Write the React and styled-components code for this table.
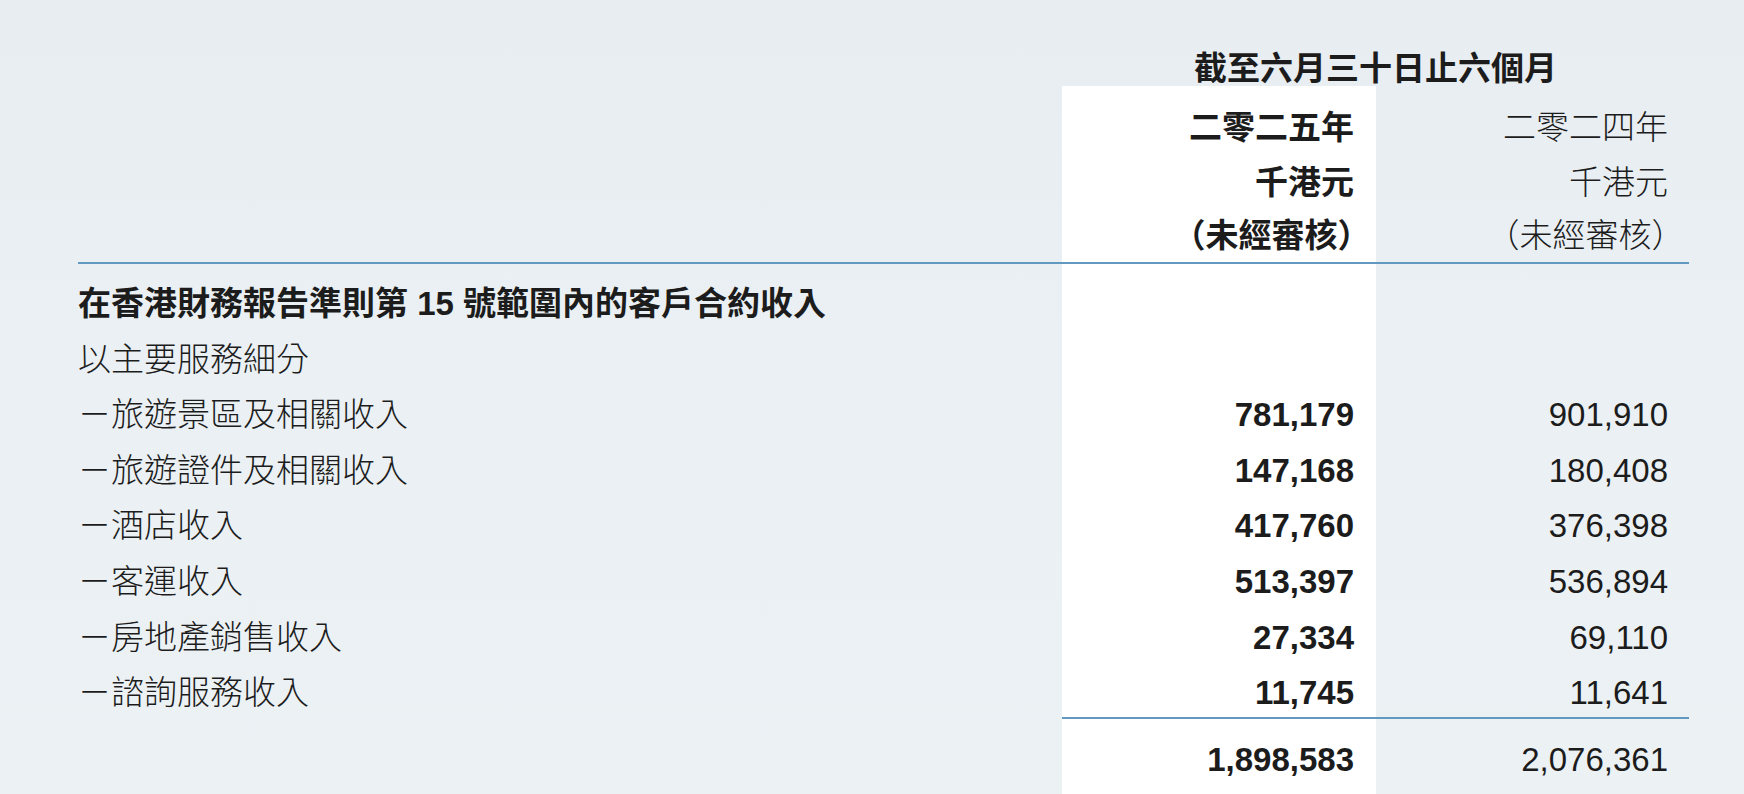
import React from "react";
import styled, { createGlobalStyle } from "styled-components";

const GlobalStyle = createGlobalStyle`
  html, body {
    margin: 0;
    padding: 0;
    height: 100%;
    overflow: hidden;
  }
  body {
    background: linear-gradient(180deg, #e7edf1 0%, #eaf0f3 45%, #ecf1f4 100%);
    font-family: "Liberation Sans", "Noto Sans CJK TC", sans-serif;
    font-feature-settings: "halt";
    color: #1c1c1c;
  }
`;

const Page = styled.div`
  height: 794px;
  box-sizing: border-box;
  padding: 52px 55px 0 78px;
  display: flex;
  flex-direction: column;
`;

const Row = styled.div`
  display: grid;
  grid-template-columns: 984px 314px 313px;
  flex: ${(p) => (p.$fill ? 1 : "none")};
  border-bottom: ${(p) => (p.$rule ? "2px solid #6199c0" : "none")};

  & > div {
    padding-top: ${(p) => p.$pt || 0}px;
    line-height: ${(p) => p.$lh || 55.6}px;
  }
`;

const Title = styled.div`
  grid-column: 2 / 4;
  text-align: center;
  font-size: 33px;
  font-weight: 700;
  && {
    line-height: 34px;
  }
`;

const Label = styled.div`
  font-size: 33px;
  white-space: nowrap;
  font-weight: ${(p) => (p.$bold ? 700 : 300)};
`;

const Amount = styled.div`
  font-size: 33px;
  white-space: nowrap;
  text-align: right;
  padding-right: ${(p) => (p.$current ? 22 : 21)}px;
  font-weight: ${(p) => (p.$current ? 700 : 300)};
  background: ${(p) => (p.$current ? "#ffffff" : "transparent")};
  border-bottom: ${(p) => (p.$rule ? "2px solid #6199c0" : "none")};
`;

const lines = [
  ["－旅遊景區及相關收入", "781,179", "901,910"],
  ["－旅遊證件及相關收入", "147,168", "180,408"],
  ["－酒店收入", "417,760", "376,398"],
  ["－客運收入", "513,397", "536,894"],
  ["－房地產銷售收入", "27,334", "69,110"],
  ["－諮詢服務收入", "11,745", "11,641"],
];

export default function App() {
  return (
    <>
      <GlobalStyle />
      <Page>
        <Row>
          <Label />
          <Title>截至六月三十日止六個月</Title>
        </Row>
        <Row $pt={14} $lh={55}>
          <Label />
          <Amount $current>二零二五年</Amount>
          <Amount>二零二四年</Amount>
        </Row>
        <Row $lh={55}>
          <Label />
          <Amount $current>千港元</Amount>
          <Amount>千港元</Amount>
        </Row>
        <Row $lh={52} $rule>
          <Label />
          <Amount $current>（未經審核）</Amount>
          <Amount>（未經審核）</Amount>
        </Row>
        <Row $pt={12}>
          <Label $bold>在香港財務報告準則第 15 號範圍內的客戶合約收入</Label>
          <Amount $current />
          <Amount />
        </Row>
        <Row>
          <Label>以主要服務細分</Label>
          <Amount $current />
          <Amount />
        </Row>
        {lines.map(([name, cur, prev], i) => {
          const last = i === lines.length - 1;
          return (
            <Row key={name} $pt={last ? 4 : 0} $lh={last ? 48 : 55.6}>
              <Label>{name}</Label>
              <Amount $current $rule={last}>
                {cur}
              </Amount>
              <Amount $rule={last}>{prev}</Amount>
            </Row>
          );
        })}
        <Row $pt={13} $lh={55} $fill>
          <Label />
          <Amount $current>1,898,583</Amount>
          <Amount>2,076,361</Amount>
        </Row>
      </Page>
    </>
  );
}
